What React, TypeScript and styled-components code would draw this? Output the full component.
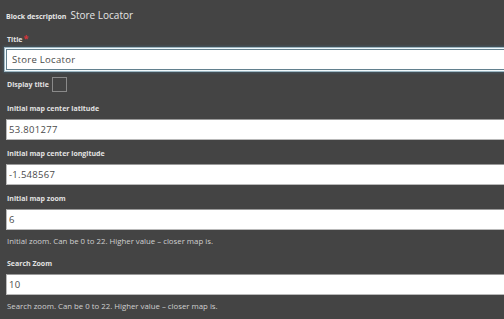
import React from "react";
import styled, { createGlobalStyle } from "styled-components";

const GlobalStyle = createGlobalStyle`
  html, body {
    margin: 0;
    padding: 0;
    background: #444444;
    overflow: hidden;
  }
  body {
    font-family: "Open Sans", "Noto Sans", "DejaVu Sans", sans-serif;
  }
`;

const Page = styled.div`
  width: 520px;
  padding: 7px 0 0 6px;
  box-sizing: border-box;
`;

const Heading = styled.div`
  display: flex;
  align-items: baseline;
  gap: 4px;
  height: 16px;
  line-height: 16px;
  color: #e6e6e6;
`;

const HeadingLabel = styled.span`
  font-size: 7px;
  font-weight: 700;
`;

const HeadingValue = styled.span`
  font-size: 10px;
`;

const Field = styled.div<{ $gap?: number }>`
  display: flex;
  flex-direction: column;
  margin-top: ${(p) => p.$gap ?? 8}px;
`;

const Label = styled.label`
  display: block;
  height: 12px;
  line-height: 12px;
  font-size: 7px;
  font-weight: 700;
  color: #e2e2e2;
  padding-left: 1px;
`;

const Required = styled.span`
  color: #d8343a;
  font-size: 9px;
  margin-left: 1px;
`;

const Input = styled.input<{ $focused?: boolean }>`
  box-sizing: border-box;
  width: 100%;
  height: 21px;
  margin-top: 4px;
  padding: 0 0 0 2px;
  font-family: inherit;
  font-size: 9.5px;
  letter-spacing: 0.3px;
  color: #4a4a4a;
  background: #ffffff;
  border: 1px solid #b9b9b9;
  border-top-color: #9a9a9a;
  outline: none;
  ${(p) =>
    p.$focused &&
    `
    padding-left: 5px;
    border-color: #62808e;
    box-shadow: 0 0 0 1px #f2fafd, 0 0 0 2px #9db7c3, 0 0 2px 3px rgba(70, 100, 118, 0.55);
  `}
`;

const Help = styled.div`
  height: 12px;
  line-height: 12px;
  margin-top: 5px;
  font-size: 7.8px;
  color: #d0d0d0;
  padding-left: 1px;
`;

const CheckRow = styled.div`
  display: flex;
  align-items: center;
  gap: 3px;
  margin-top: 7px;
  height: 15px;
`;

const CheckLabel = styled(Label)`
  display: inline;
  height: auto;
`;

const Box = styled.span`
  box-sizing: border-box;
  width: 15px;
  height: 15px;
  border: 1px solid #8a8a8a;
  background: #444444;
`;

export default function App() {
  return (
    <>
      <GlobalStyle />
      <Page>
        <Heading>
          <HeadingLabel>Block description</HeadingLabel>
          <HeadingValue>Store Locator</HeadingValue>
        </Heading>

        <Field $gap={10}>
          <Label>
            Title<Required>*</Required>
          </Label>
          <Input $focused defaultValue="Store Locator" />
        </Field>

        <CheckRow>
          <CheckLabel>Display title</CheckLabel>
          <Box />
        </CheckRow>

        <Field $gap={11}>
          <Label>Initial map center latitude</Label>
          <Input defaultValue="53.801277" />
        </Field>

        <Field>
          <Label>Initial map center longitude</Label>
          <Input defaultValue="-1.548567" />
        </Field>

        <Field>
          <Label>Initial map zoom</Label>
          <Input defaultValue="6" />
          <Help>Initial zoom. Can be 0 to 22. Higher value – closer map is.</Help>
        </Field>

        <Field $gap={11}>
          <Label>Search Zoom</Label>
          <Input defaultValue="10" />
          <Help>Search zoom. Can be 0 to 22. Higher value – closer map is.</Help>
        </Field>

        <Field $gap={11}>
          <Input defaultValue="" />
        </Field>
      </Page>
    </>
  );
}
